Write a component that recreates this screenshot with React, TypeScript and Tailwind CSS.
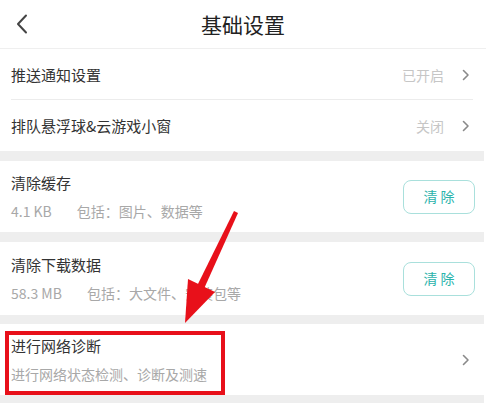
import React from "react";

function Chevron({ className = "" }: { className?: string }) {
  return (
    <svg width="8" height="12" viewBox="0 0 8 12" className={className} aria-hidden>
      <path d="M1.5 1.5 L6 6 L1.5 10.5" fill="none" stroke="currentColor" strokeWidth="1.6" strokeLinecap="round" strokeLinejoin="round" />
    </svg>
  );
}

function LinkRow({ title, value, divider }: { title: string; value: string; divider?: boolean }) {
  return (
    <div className="relative flex h-[51px] items-center pl-[11px] pr-[16px]">
      <span className="flex-1 text-[15px] leading-[22px] text-[#333]">{title}</span>
      <span className="text-[14px] leading-[20px] text-[#c6c6c6]">{value}</span>
      <Chevron className="ml-[18px] text-[#8a8a8a]" />
      {divider && <div className="absolute bottom-0 left-[11px] right-[13px] h-px bg-[#ececec]" />}
    </div>
  );
}

function ClearRow({ title, size, desc, height }: { title: string; size: string; desc: string; height: string }) {
  return (
    <div className={`flex items-center pl-[11px] pr-[11px] ${height}`}>
      <div className="flex flex-1 flex-col gap-[7px]">
        <span className="text-[15px] leading-[22px] text-[#333]">{title}</span>
        <div className="flex text-[14px] leading-[20px] text-[#a8a8a8]">
          <span className="mr-[25px]">{size}</span>
          <span>{desc}</span>
        </div>
      </div>
      <button className="flex h-[34px] w-[72px] items-center justify-center rounded-[8px] border border-[#a9e0dc] text-[14px] text-[#2bb3ab]">
        清&nbsp;除
      </button>
    </div>
  );
}

function Band({ h = "h-[10px]" }: { h?: string }) {
  return <div className={`w-[484px] bg-[#eeeeee] ${h}`} />;
}

export default function App() {
  return (
    <div
      className="relative h-[411px] w-[486px] overflow-hidden bg-white"
      style={{ fontFamily: '"Noto Sans CJK SC", "Noto Sans", sans-serif' }}
    >
      {/* header */}
      <div className="relative flex h-[49px] items-center justify-center border-b border-[#efefef]">
        <svg width="12" height="20" viewBox="0 0 12 20" className="absolute left-[16px] top-[14px] text-[#444]" aria-hidden>
          <path d="M10 1.5 L2 10 L10 18.5" fill="none" stroke="currentColor" strokeWidth="2" strokeLinecap="round" strokeLinejoin="round" />
        </svg>
        <span className="text-[21px] leading-[28px] text-[#222]">基础设置</span>
      </div>

      <LinkRow title="推送通知设置" value="已开启" divider />
      <LinkRow title="排队悬浮球&云游戏小窗" value="关闭" />
      <Band />
      <ClearRow title="清除缓存" size="4.1 KB" desc="包括：图片、数据等" height="h-[71px]" />
      <Band />
      <ClearRow title="清除下载数据" size="58.3 MB" desc="包括：大文件、安装包等" height="h-[73px]" />
      <Band h="h-[9px]" />

      <div className="relative flex h-[71px] items-center pl-[11px] pr-[16px]">
        <div className="flex flex-1 flex-col gap-[7px]">
          <span className="text-[15px] leading-[22px] text-[#333]">进行网络诊断</span>
          <span className="text-[14px] leading-[20px] text-[#a8a8a8]">进行网络状态检测、诊断及测速</span>
        </div>
        <Chevron className="text-[#8a8a8a]" />
        {/* red highlight box */}
        <div className="absolute left-[5px] top-[7px] h-[64px] w-[220px] border-[4px] border-[#e8101a]" />
      </div>
      <Band h="h-[8px]" />

      {/* red arrow annotation */}
      <svg width="486" height="411" className="pointer-events-none absolute left-0 top-0" aria-hidden>
        <polygon points="234,211 238,213 203,291 196,288" fill="#e8101a" />
        <polygon points="185,323 188,279 215,292" fill="#e8101a" />
      </svg>
    </div>
  );
}
